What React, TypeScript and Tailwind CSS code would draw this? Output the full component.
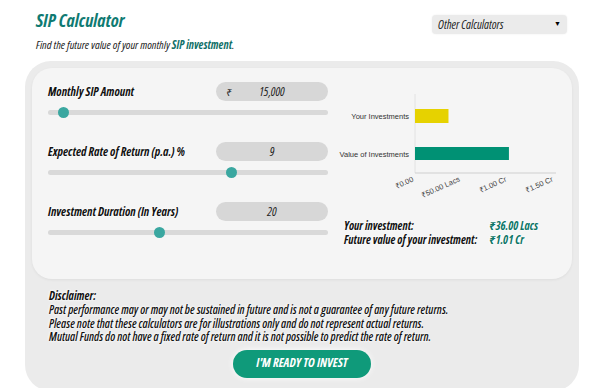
import React from 'react';

const glow = '[text-shadow:0_0_3px_#fff,0_0_3px_#fff]';

interface SliderRowProps {
  label: string;
  value: string;
  prefix?: string;
  percent: number;
}

const SliderRow: React.FC<SliderRowProps> = ({ label, value, prefix, percent }) => {
  return (
    <div className="h-[60px]">
      <div className="flex items-center justify-between h-[19px]">
        <span className={`text-[12px] leading-[16px] font-bold italic text-[#111] ${glow}`}>{label}</span>
        <div className="relative w-[112px] h-[19px] rounded-full bg-[#d7d7d7] flex items-center justify-center text-[12px] leading-[16px] italic text-[#222]">
          {prefix && <span className="absolute left-[10px] text-[10px]">{prefix}</span>}
          <span>{value}</span>
        </div>
      </div>
      <div className="relative mt-[9px] h-[5px] rounded-full bg-[#d9d9d9]">
        {/* thumb */}
        <div
          className="absolute top-[-3px] w-[11px] h-[11px] -ml-[5px] rounded-full bg-[#3aa7a0]"
          style={{ left: `${percent}%` }}
        />
      </div>
    </div>
  );
};

const Chart: React.FC = () => {
  const x0 = 79;
  const scale = 93; // px per crore
  const ticks = [
    { v: 0, t: '₹0.00' },
    { v: 0.5, t: '₹50.00 Lacs' },
    { v: 1, t: '₹1.00 Cr' },
    { v: 1.5, t: '₹1.50 Cr' }
  ];
  return (
    <svg width="230" height="116" viewBox="0 0 230 116" className="block" style={{ fontFamily: '"Liberation Sans", Arial, sans-serif', fontStretch: '100%' }}>
      <line x1={x0} y1="6" x2={x0} y2="85" stroke="#e2e2e2" strokeWidth="1" />
      <line x1={x0} y1="85" x2="220" y2="85" stroke="#cfcfcf" strokeWidth="1" />
      <rect x={x0} y="21" width={0.36 * scale} height="14" fill="#e6d200" />
      <rect x={x0} y="59" width={1.01 * scale} height="13" fill="#009174" />
      <text x={x0 - 6} y="31" fontSize="7.5" textAnchor="end" fill="#333">Your Investments</text>
      <text x={x0 - 6} y="69" fontSize="7.5" textAnchor="end" fill="#333">Value of Investments</text>
      {ticks.map((tk) => {
        const x = x0 + tk.v * scale - 1;
        return (
          <text key={tk.t} x={x} y="93" fontSize="7.5" textAnchor="end" fill="#444" transform={`rotate(-24 ${x} 93)`}>
            {tk.t}
          </text>
        );
      })}
    </svg>
  );
};

export default function App() {
  return (
    <div
      className="w-[600px] h-[388px] overflow-hidden bg-white [font-stretch:75%]"
      style={{ fontFamily: '"Open Sans", "Noto Sans", sans-serif' }}
    >
      {/* Header */}
      <div className="flex items-start justify-between pl-[36px] pr-[33px] pt-[8px]">
        <div>
          <h1 className="text-[18px] leading-[24px] font-bold italic text-[#0f7a72]">SIP Calculator</h1>
          <p className="mt-[5px] text-[11.5px] leading-[15px] italic text-[#222]">
            Find the future value of your monthly <span className="font-bold text-[#0f6f68]">SIP investment</span>.
          </p>
        </div>
        <div className="mt-[7px] w-[135px] h-[19px] rounded-[4px] bg-[#ebebeb] shadow-[0_0_2px_rgba(0,0,0,0.08)] flex items-center justify-between pl-[6px] pr-[6px] text-[12px] italic text-[#222]">
          <span>Other Calculators</span>
          <span className="text-[7px] text-black">▼</span>
        </div>
      </div>

      {/* Calculator box */}
      <div className="ml-[25px] mt-[9px] w-[554px] h-[330px] rounded-[26px] bg-[#ebebeb] pt-[7px] px-[7px]">
        <div className="h-[211px] rounded-[20px] bg-[#f5f5f5] shadow-[0_1px_3px_rgba(0,0,0,0.06)] flex pl-[16px] pt-[14px]">
          <div className="w-[280px]">
            <SliderRow label="Monthly SIP Amount" prefix="₹" value="15,000" percent={5.5} />
            <SliderRow label="Expected Rate of Return (p.a.) %" value="9" percent={65.5} />
            <SliderRow label="Investment Duration (In Years)" value="20" percent={39.5} />
          </div>
          <div className="ml-[8px] mt-[6px]">
            <Chart />
            <div className={`mt-[15px] pl-[8px] grid grid-cols-[145px_auto] text-[11.6px] leading-[14px] font-bold italic ${glow}`}>
              <span className="text-[#111]">Your investment:</span>
              <span className="text-[#0b7566]">₹36.00 Lacs</span>
              <span className="text-[#111]">Future value of your investment:</span>
              <span className="text-[#0b7566]">₹1.01 Cr</span>
            </div>
          </div>
        </div>

        {/* Disclaimer */}
        <div className={`pl-[17px] pt-[9px] text-[11.8px] italic font-semibold text-[#111] ${glow}`}>
          <p className="font-bold leading-[14px] mb-[1px]">Disclaimer:</p>
          <p className="leading-[13.5px]">Past performance may or may not be sustained in future and is not a guarantee of any future returns.</p>
          <p className="leading-[13.5px]">Please note that these calculators are for illustrations only and do not represent actual returns.</p>
          <p className="leading-[13.5px]">Mutual Funds do not have a fixed rate of return and it is not possible to predict the rate of return.</p>
        </div>

        <div className="flex justify-center mt-[6px]">
          <button className="w-[138px] h-[28px] rounded-full bg-[#0f9a7a] text-white text-[12.5px] font-bold italic shadow-[0_0_6px_rgba(255,255,255,0.9)]">
            I'M READY TO INVEST
          </button>
        </div>
      </div>
    </div>
  );
}
